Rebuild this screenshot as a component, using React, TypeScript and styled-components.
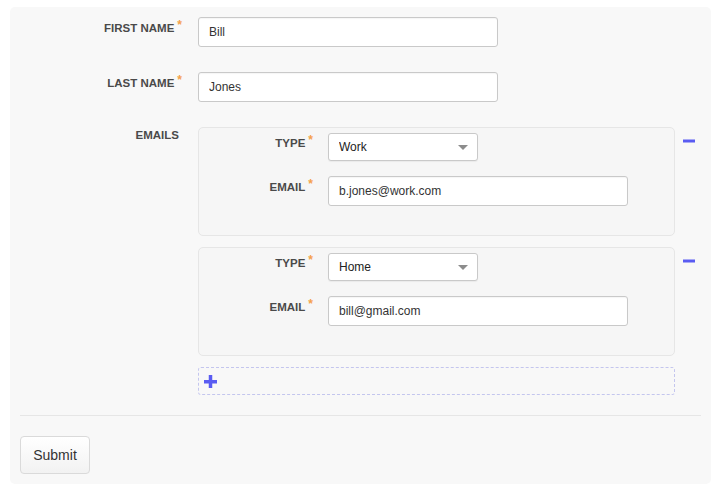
import React from "react";
import styled, { createGlobalStyle } from "styled-components";

const GlobalStyle = createGlobalStyle`
  html, body { margin: 0; padding: 0; background: #ffffff; }
  body { font-family: "Liberation Sans", Arial, Helvetica, sans-serif; }
  * { box-sizing: border-box; }
`;

const Page = styled.div`
  padding: 7px 13px 9px 10px;
`;

const Panel = styled.form`
  background: #f8f8f8;
  border-radius: 5px;
  padding: 10px 10px 10px 10px;
  display: flex;
  flex-direction: column;
`;

const Field = styled.div<{ $mt?: number }>`
  display: grid;
  grid-template-columns: 162px 1fr;
  column-gap: 16px;
  margin-top: ${(p) => p.$mt ?? 0}px;
`;

const Label = styled.label<{ $pt?: number; $pr?: number }>`
  display: block;
  text-align: right;
  font-size: 11.5px;
  line-height: 16px;
  font-weight: bold;
  color: #4a4a4a;
  text-transform: uppercase;
  padding-top: ${(p) => p.$pt ?? 3}px;
  padding-right: ${(p) => p.$pr ?? 0}px;
  white-space: nowrap;
`;

const Star = styled.span`
  color: #f5a04a;
  font-size: 12px;
  margin-left: 3px;
  position: relative;
  top: -3px;
`;

const TextInput = styled.input`
  width: 300px;
  height: 30px;
  border: 1px solid #c9c9c9;
  border-radius: 3px;
  background: #ffffff;
  padding: 0 10px;
  font-family: "Liberation Sans", Arial, Helvetica, sans-serif;
  font-size: 12px;
  color: #333333;
  box-shadow: inset 0 1px 1px rgba(0, 0, 0, 0.04);
  outline: none;
`;

const EmailList = styled.div`
  display: flex;
  flex-direction: column;
  gap: 11px;
`;

const GroupRow = styled.div`
  display: flex;
  align-items: flex-start;
`;

const Card = styled.div`
  flex: 1;
  background: #f6f6f6;
  border: 1px solid #e6e6e6;
  border-radius: 5px;
  padding: 5px 0 29px 0;
  display: flex;
  flex-direction: column;
  gap: 15px;
`;

const CardField = styled.div`
  display: grid;
  grid-template-columns: 114px 1fr;
  column-gap: 15px;
`;

const SelectWrap = styled.div`
  position: relative;
  width: 150px;
  height: 28px;
  &::after {
    content: "";
    position: absolute;
    right: 10px;
    top: 12px;
    border-left: 5px solid transparent;
    border-right: 5px solid transparent;
    border-top: 5px solid #8c8c8c;
    pointer-events: none;
  }
`;

const Select = styled.select`
  appearance: none;
  -webkit-appearance: none;
  width: 100%;
  height: 100%;
  border: 1px solid #c9c9c9;
  border-radius: 3px;
  background: #ffffff;
  padding: 0 10px;
  font-family: "Liberation Sans", Arial, Helvetica, sans-serif;
  font-size: 12px;
  color: #222222;
  box-shadow: 0 1px 1px rgba(0, 0, 0, 0.05);
  outline: none;
`;

const RemoveButton = styled.button`
  width: 26px;
  padding: 12px 0 0 8px;
  border: 0;
  background: transparent;
  display: flex;
  cursor: pointer;
`;

const AddButton = styled.button`
  margin-right: 26px;
  height: 28px;
  border: 1px dashed #c4c6ee;
  border-radius: 3px;
  background: transparent;
  display: flex;
  align-items: center;
  padding: 0 0 0 5px;
  cursor: pointer;
`;

const Divider = styled.hr`
  border: 0;
  border-top: 1px solid #e6e6e6;
  margin: 20px 0 20px 0;
  height: 0;
`;

const SubmitButton = styled.button`
  align-self: flex-start;
  width: 70px;
  height: 38px;
  border: 1px solid #dadada;
  border-radius: 4px;
  background: linear-gradient(#ffffff, #f2f2f2);
  font-family: "Liberation Sans", Arial, Helvetica, sans-serif;
  font-size: 14px;
  color: #333333;
  cursor: pointer;
`;

const MinusIcon = () => (
  <svg width="12" height="4" viewBox="0 0 12 4">
    <rect x="0" y="0.5" width="12" height="3" fill="#5a5cf2" />
  </svg>
);

const PlusIcon = () => (
  <svg width="13" height="13" viewBox="0 0 13 13">
    <rect x="0" y="5" width="13" height="3.5" fill="#5a5cf2" />
    <rect x="4.75" y="0" width="3.5" height="13" fill="#5a5cf2" />
  </svg>
);

type Email = { type: string; address: string };

const emails: Email[] = [
  { type: "Work", address: "b.jones@work.com" },
  { type: "Home", address: "bill@gmail.com" },
];

const Required = () => <Star>*</Star>;

export default function App() {
  return (
    <>
      <GlobalStyle />
      <Page>
        <Panel onSubmit={(e) => e.preventDefault()}>
          <Field>
            <Label>
              First Name
              <Required />
            </Label>
            <TextInput defaultValue="Bill" />
          </Field>
          <Field $mt={25}>
            <Label>
              Last Name
              <Required />
            </Label>
            <TextInput defaultValue="Jones" />
          </Field>
          <Field $mt={25}>
            <Label $pt={0} $pr={3}>
              Emails
            </Label>
            <EmailList>
              {emails.map((em, i) => (
                <GroupRow key={i}>
                  <Card>
                    <CardField>
                      <Label $pt={2}>
                        Type
                        <Required />
                      </Label>
                      <SelectWrap>
                        <Select defaultValue={em.type}>
                          <option>Work</option>
                          <option>Home</option>
                        </Select>
                      </SelectWrap>
                    </CardField>
                    <CardField>
                      <Label>
                        Email
                        <Required />
                      </Label>
                      <TextInput defaultValue={em.address} />
                    </CardField>
                  </Card>
                  <RemoveButton type="button" aria-label="Remove email">
                    <MinusIcon />
                  </RemoveButton>
                </GroupRow>
              ))}
              <AddButton type="button" aria-label="Add email">
                <PlusIcon />
              </AddButton>
            </EmailList>
          </Field>
          <Divider />
          <SubmitButton type="submit">Submit</SubmitButton>
        </Panel>
      </Page>
    </>
  );
}
